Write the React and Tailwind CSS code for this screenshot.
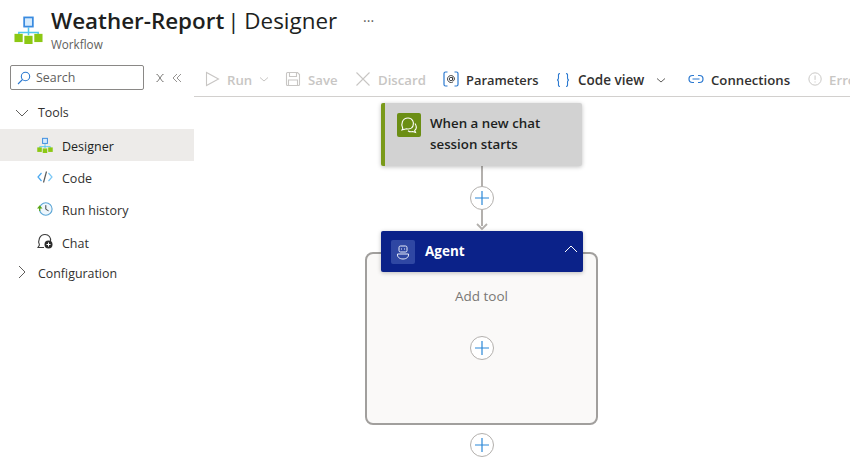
import React from "react";

const font = { fontFamily: '"Open Sans", "Noto Sans", sans-serif' };

// Workflow logo, used at two sizes in the header and the sidebar
const WorkflowIcon = ({ className }) => (
  <svg viewBox="0 0 30 30" className={className}>
    <path d="M15 13v6M5 21v-3h20v3M15 18v3" fill="none" stroke="#50c8f0" strokeWidth="1.6" />
    <rect x="10.5" y="2.5" width="9" height="9.5" fill="#d6ebfd" stroke="#3a8be0" strokeWidth="1.8" />
    <rect x="0.5" y="19.5" width="8.5" height="8.5" fill="#8cc814" />
    <rect x="10.7" y="21.5" width="8.5" height="8.5" fill="#8cc814" />
    <rect x="21" y="19.5" width="8.5" height="8.5" fill="#8cc814" />
  </svg>
);

const CodeIcon = () => (
  <svg viewBox="0 0 16 16" className="w-4 h-4" fill="none" strokeWidth="1.2">
    <path d="M4.5 4 1 8l3.5 4" stroke="#4aa8f0" />
    <path d="M11.5 4 15 8l-3.5 4" stroke="#7cc8f5" />
    <path d="M9.5 2.5 6.5 13.5" stroke="#5a5a5a" />
  </svg>
);

const HistoryIcon = () => (
  <svg viewBox="0 0 16 16" className="w-4 h-4" fill="none">
    <circle cx="8.8" cy="8" r="6.3" fill="#eef6fc" stroke="#5aa5d5" strokeWidth="1.1" />
    <path d="M8.8 4.2V8.3l2.8 1.5" stroke="#444" strokeWidth="1" />
    <path d="M0 7.5h5.5L2.7 4.3z" fill="#5ba614" />
    <path d="M2.7 7v3" stroke="#5ba614" strokeWidth="1.2" />
  </svg>
);

const ChatIcon = () => (
  <svg viewBox="0 0 16 16" className="w-4 h-4" fill="none">
    <path d="M2.5 12C.5 8 2.5 1.5 8 1.5c4 0 6 3.2 5.500 6.500" stroke="#3a3a3a" strokeWidth="1.1" />
    <path d="M2.5 12 1 14.5h6" stroke="#3a3a3a" strokeWidth="1.1" />
    <circle cx="11.5" cy="11.5" r="4" fill="#2b2b2b" />
    <path d="M11.5 9.5v4M9.5 11.5h4" stroke="#fff" strokeWidth="1" />
  </svg>
);

const PlayIcon = () => (
  <svg viewBox="0 0 16 16" className="w-4 h-4" fill="none" stroke="#c8c6c4" strokeWidth="1.1">
    <path d="M2.5 1.5v13l12-6.5z" />
  </svg>
);

const SaveIcon = () => (
  <svg viewBox="0 0 16 16" className="w-4 h-4" fill="none" stroke="#c8c6c4" strokeWidth="1.1">
    <path d="M1.5 2.5a1 1 0 0 1 1-1h10l2 2v10a1 1 0 0 1-1 1h-11a1 1 0 0 1-1-1z" />
    <path d="M4.5 1.5v4h7v-4M3.5 14.5v-5.5h9v5.5" />
  </svg>
);

const DiscardIcon = () => (
  <svg viewBox="0 0 16 16" className="w-4 h-4" fill="none" stroke="#c8c6c4" strokeWidth="1.1">
    <path d="M1.5 1.5l13 13M14.5 1.5l-13 13" />
  </svg>
);

const ParamsIcon = () => (
  <svg viewBox="0 0 16 16" className="w-4 h-4" fill="none">
    <path d="M4.5 1H2.500A1.500 1.500 0 0 0 1 2.500v11A1.500 1.500 0 0 0 2.500 15h2M11.500 1h2A1.500 1.500 0 0 1 15 2.500v11a1.500 1.500 0 0 1-1.500 1.500h-2" stroke="#2b79d0" strokeWidth="1.2" />
    <circle cx="8" cy="8" r="1.7" stroke="#333" strokeWidth="0.9" />
    <path d="M9.700 6.200v2.600c0 1.300 1.800 1.100 1.800-.8a3.500 3.500 0 1 0-1.500 2.900" stroke="#333" strokeWidth="0.9" />
  </svg>
);

const BracesIcon = () => (
  <svg viewBox="0 0 16 16" className="w-4 h-4" fill="none" stroke="#2b79d0" strokeWidth="1.1">
    <path d="M5 1.500C3 1.500 3.500 3 3.500 5.500 3.500 7 3 8 2 8c1 0 1.500 1 1.500 2.500 0 2.500-.5 4 1.500 4" />
    <path d="M11 1.500c2 0 1.500 1.500 1.500 4 0 1.500.5 2.500 1.500 2.500-1 0-1.500 1-1.500 2.500 0 2.500.5 4-1.500 4" />
  </svg>
);

const LinkIcon = () => (
  <svg viewBox="0 0 16 16" className="w-4 h-4" fill="none" stroke="#2b79d0" strokeWidth="1.2">
    <path d="M6 4.500H4.500a3.500 3.500 0 0 0 0 7H6M10 4.500h1.500a3.500 3.500 0 0 1 0 7H10M4.500 8h7" />
  </svg>
);

const ErrorIcon = () => (
  <svg viewBox="0 0 16 16" className="w-4 h-4" fill="none" stroke="#c8c6c4" strokeWidth="1.1">
    <circle cx="8" cy="8" r="7" />
    <path d="M8 4v5M8 10.800v1.200" />
  </svg>
);

const SmallChevron = ({ color, className }) => (
  <svg viewBox="0 0 10 10" className={`w-2.5 h-2.5 ${className}`} fill="none" stroke={color} strokeWidth="1">
    <path d="M1 3.500l4 3.500 4-3.500" />
  </svg>
);

const PlusButton = ({ className }) => (
  <div className={`absolute w-6 h-6 rounded-full bg-white border border-[#b3b0ad] flex items-center justify-center ${className}`}>
    <svg viewBox="0 0 14 14" className="w-3.5 h-3.5" fill="none" stroke="#2b88d8" strokeWidth="1.2">
      <path d="M7 0v14M0 7h14" />
    </svg>
  </div>
);

const toolbarItems = [
  { label: "Run", icon: PlayIcon, disabled: true, chevron: "ml-0", width: "w-[81px]", size: "text-[13.2px]" },
  { label: "Save", icon: SaveIcon, disabled: true, width: "w-[70px]", size: "text-[13.2px]" },
  { label: "Discard", icon: DiscardIcon, disabled: true, width: "w-[88px]", size: "text-[13.2px]" },
  { label: "Parameters", icon: ParamsIcon, width: "w-[112px]", size: "text-[12.9px]" },
  { label: "Code view", icon: BracesIcon, chevron: "ml-[5px]", width: "w-[133px]", size: "text-[13.5px]" },
  { label: "Connections", icon: LinkIcon, width: "w-[120px]", size: "text-[13.2px]" },
  { label: "Errors", icon: ErrorIcon, disabled: true, width: "w-[60px]", size: "text-[13.2px]" },
];

const navItems = [
  { label: "Designer", icon: <WorkflowIcon className="w-4 h-4" />, active: true },
  { label: "Code", icon: <CodeIcon /> },
  { label: "Run history", icon: <HistoryIcon /> },
  { label: "Chat", icon: <ChatIcon />, pad: "pt-[6px]" },
];

export default function App() {
  return (
    <div className="w-[850px] h-[460px] bg-white overflow-hidden text-[#323130]" style={font}>
      {/* Header */}
      <div className="h-[63px] flex items-start pl-[14px] pt-[14px]">
        <WorkflowIcon className="w-[29px] h-[29px] mt-[1px]" />
        <div className="ml-[8px] -mt-[9px]">
          <div className="flex items-center text-[22.4px] leading-[32px] text-[#201f1e] whitespace-nowrap">
            <span className="font-semibold">Weather-Report</span>
            <span className="ml-[3px] [word-spacing:-1px]">| Designer</span>
            <span className="ml-[26px] text-[14px] text-[#605e5c]">···</span>
          </div>
          <div className="text-[11.7px] leading-[16px] -mt-[1px] text-[#605e5c]">Workflow</div>
        </div>
      </div>

      <div className="flex h-[397px]">
        {/* Sidebar */}
        <div className="w-[194px] shrink-0">
          <div className="flex items-center pl-[10px] h-[27px] mt-[1px]">
            <div className="w-[134px] h-[25px] border border-[#8a8886] rounded-[2px] flex items-center pl-[6px]">
              <svg viewBox="0 0 14 14" className="w-3.5 h-3.5" fill="none" stroke="#2b79d0" strokeWidth="1.1">
                <circle cx="8.500" cy="5.500" r="4.200" />
                <path d="M5.500 8.500 1 13" />
              </svg>
              <span className="ml-[5px] pt-[1px] text-[12.4px] text-[#605e5c]">Search</span>
            </div>
            <svg viewBox="0 0 10 10" className="w-2.5 h-2.5 ml-[11px]" fill="none" stroke="#605e5c" strokeWidth="0.8">
              <path d="M1.500 1.500h1l5 7h1M8.500 1.500h-1l-5 7h-1" />
            </svg>
            <svg viewBox="0 0 10 10" className="w-2.5 h-2.5 ml-[7px]" fill="none" stroke="#8a8886" strokeWidth="0.9">
              <path d="M5 1 1 5l4 4M9 1 5 5l4 4" />
            </svg>
          </div>

          <div className="h-[32px] mt-[6px] flex items-center pl-[15px] text-[12.4px]">
            <svg viewBox="0 0 14 14" className="w-3.5 h-3.5" fill="none" stroke="#605e5c" strokeWidth="1">
              <path d="M1 4l6 6 6-6" />
            </svg>
            <span className="ml-[9px]">Tools</span>
          </div>
          {navItems.map((item) => (
            <div
              key={item.label}
              className={`h-[32px] flex items-center pl-[37px] text-[12.5px] ${item.active ? "bg-[#edebe9] text-[#201f1e]" : ""}`}
            >
              {item.icon}
              <span className={`ml-[9px] ${item.pad || "pt-[4px]"}`}>{item.label}</span>
            </div>
          ))}
          <div className="h-[30px] flex items-center pl-[15px] text-[12.4px]">
            <svg viewBox="0 0 14 14" className="w-3.5 h-3.5" fill="none" stroke="#605e5c" strokeWidth="1">
              <path d="M4 1l6 6-6 6" />
            </svg>
            <span className="ml-[9px] pt-[4px]">Configuration</span>
          </div>
        </div>

        {/* Main */}
        <div className="flex-1 min-w-0 flex flex-col">
          <div className="h-[34px] shrink-0 border-b border-[#d2d0ce] flex items-center pl-[10px] overflow-hidden">
            {toolbarItems.map((item) => {
              const Icon = item.icon;
              return (
                <div
                  key={item.label}
                  className={`${item.width} ${item.size} shrink-0 flex items-center gap-[7px] font-semibold whitespace-nowrap ${item.disabled ? "text-[#c8c6c4]" : "text-[#323130]"}`}
                >
                  <Icon />
                  <span className="pt-[2px]">{item.label}</span>
                  {item.chevron && <SmallChevron color={item.disabled ? "#c8c6c4" : "#605e5c"} className={item.chevron} />}
                </div>
              );
            })}
          </div>

          {/* Canvas: nodes sit at their diagram coordinates */}
          <div className="relative flex-1 overflow-hidden">
            <div className="absolute left-[171px] top-[155px] w-[233px] h-[173px] bg-[#faf9f8] border-2 border-[#a19f9d] rounded-[8px] flex flex-col items-center pt-[32px] text-[13.5px] text-[#797775]">
              Add tool
            </div>

            <div className="absolute left-[287px] top-[69px] w-[2px] h-[60px] bg-[#b3b0ad]" />
            <svg viewBox="0 0 12 8" className="absolute left-[282px] top-[126px] w-3 h-2" fill="none" stroke="#b3b0ad" strokeWidth="1.8">
              <path d="M1 1l5 5 5-5" />
            </svg>

            <div className="absolute left-[187px] top-[6px] w-[201px] h-[63px] bg-[#d2d2d2] border-l-4 border-[#7a9a1a] rounded-[2px] shadow-[0_1px_4px_rgba(0,0,0,0.25)] flex items-start pl-[12px] pt-[10px]">
              <div className="w-6 h-6 shrink-0 bg-[#6b8e14] rounded-[2px] flex items-center justify-center">
                <svg viewBox="0 0 18 18" className="w-[18px] h-[18px]" fill="none" stroke="#fff" strokeWidth="1.1">
                  <path d="M2.800 12.500C.5 8 2.500 2 8 2c4.500 0 6.500 4.500 5 8-1 2.500-4 3.500-6.500 2.800L2 14z" />
                  <path d="M15 7.500c1.800 2.800 1.500 5.500-.3 7l.8 1.800-3-.8c-1.500.5-3.200.2-4.500-.8" />
                </svg>
              </div>
              <div className="ml-[9px] text-[13.3px] leading-[21px] font-semibold text-[#201f1e]">
                When a new chat
                <br />
                session starts
              </div>
            </div>

            <PlusButton className="left-[276px] top-[89px]" />

            <div className="absolute left-[187px] top-[134px] w-[202px] h-[41px] bg-[#0b2289] rounded-[2px] shadow-[0_1px_4px_rgba(0,0,0,0.25)] flex items-center pl-[10px] pr-[5px]">
              <div className="w-6 h-6 bg-[#2f47a3] rounded-[2px] flex items-center justify-center">
                <svg viewBox="0 0 16 16" className="w-4 h-4" fill="none" stroke="#e8ecf8" strokeWidth="1">
                  <rect x="4" y="2" width="8" height="6" rx="1.5" />
                  <path d="M6.500 4.500v1M9.500 4.500v1" />
                  <path d="M2.500 10h11c.5 3-2 5-5.500 5s-6-2-5.500-5z" />
                </svg>
              </div>
              <span className="ml-[10px] text-[13.5px] font-bold text-white">Agent</span>
              <svg viewBox="0 0 14 14" className="w-3.5 h-3.5 ml-auto -mt-[5px]" fill="none" stroke="#fff" strokeWidth="1">
                <path d="M1 10l6-6 6 6" />
              </svg>
            </div>

            <PlusButton className="left-[276px] top-[239px]" />
            <PlusButton className="left-[276px] top-[336px]" />
          </div>
        </div>
      </div>
    </div>
  );
}
